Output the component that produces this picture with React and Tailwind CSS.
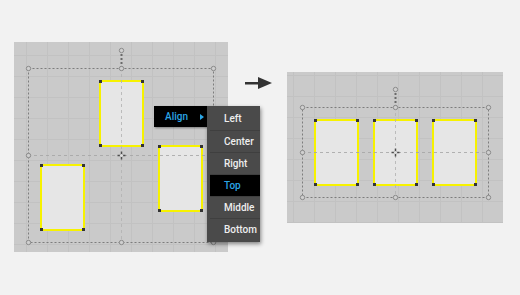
import React from 'react';

const grid =
  'bg-[#cacaca] bg-[linear-gradient(to_right,#c2c2c2_1px,transparent_1px),linear-gradient(to_bottom,#c2c2c2_1px,transparent_1px)] bg-[size:21px_21px]';

function Box({ x, y }) {
  return (
    <div
      className="absolute w-[45px] h-[67px] bg-[#e6e6e6] border-2 border-[#f7f200]"
      style={{ left: x, top: y }}
    >
      <span className="absolute -left-[2px] -top-[2px] w-[3px] h-[3px] bg-[#333]" />
      <span className="absolute -right-[2px] -top-[2px] w-[3px] h-[3px] bg-[#333]" />
      <span className="absolute -left-[2px] -bottom-[2px] w-[3px] h-[3px] bg-[#333]" />
      <span className="absolute -right-[2px] -bottom-[2px] w-[3px] h-[3px] bg-[#333]" />
    </div>
  );
}

// selection frame, handles and guides
function Guides({ w, h, x1, y1, x2, y2, cx, cy, top }) {
  const handles = [
    [x1, y1], [cx, y1], [x2, y1],
    [x1, cy], [x2, cy],
    [x1, y2], [cx, y2], [x2, y2],
    [cx, top],
  ];
  return (
    <svg className="absolute inset-0" width={w} height={h}>
      <rect x={x1 + 0.5} y={y1 + 0.5} width={x2 - x1} height={y2 - y1} fill="none" stroke="#7d7d7d" strokeDasharray="2 2" />
      <line x1={cx + 0.5} y1={top} x2={cx + 0.5} y2={y1} stroke="#6a6a6a" strokeWidth="2" strokeDasharray="2 2" />
      <line x1={cx + 0.5} y1={y1} x2={cx + 0.5} y2={y2} stroke="#b0b0b0" strokeOpacity="0.8" strokeDasharray="3 3" />
      <line x1={x1} y1={cy + 0.5} x2={x2} y2={cy + 0.5} stroke="#a3a3a3" strokeOpacity="0.8" strokeDasharray="3 3" />
      {handles.map(([hx, hy], i) => (
        <circle key={i} cx={hx + 0.5} cy={hy + 0.5} r="2.2" fill="#cfcfcf" stroke="#8a8a8a" />
      ))}
      <g stroke="#4d4d4d" strokeWidth="1.5">
        <line x1={cx - 3.5} y1={cy + 0.5} x2={cx + 4.5} y2={cy + 0.5} />
        <line x1={cx + 0.5} y1={cy - 3.5} x2={cx + 0.5} y2={cy + 4.5} />
      </g>
      <circle cx={cx + 0.5} cy={cy + 0.5} r="1.6" fill="#e0e0e0" />
    </svg>
  );
}

const items = ['Left', 'Center', 'Right', 'Top', 'Middle', 'Bottom'];

export default function App() {
  return (
    <div
      className="w-[520px] h-[295px] bg-[#f2f2f2] flex items-start pl-[14px] overflow-hidden"
      style={{ fontFamily: 'Roboto, "Liberation Sans", sans-serif' }}
    >
      {/* before */}
      <div className={`relative w-[214px] h-[210px] mt-[42px] ${grid} bg-[position:12px_13px]`}>
        <Box x={85} y={38} />
        <Box x={26} y={122} />
        <Box x={144} y={103} />
        <Guides w={214} h={210} x1={14} y1={26} x2={199} y2={200} cx={107} cy={113} top={8} />

        {/* context menu */}
        <div className="absolute left-[140px] top-[64px] w-[53px] h-[21px] bg-black flex items-center pl-[11px] pr-[3px] shadow-[1px_1px_2px_rgba(0,0,0,0.4)] z-10">
          <span className="text-[10px] font-medium text-[#2ba6e6] flex-1 leading-none">Align</span>
          <span className="w-0 h-0 border-y-[3.5px] border-y-transparent border-l-[4px] border-l-[#2ba6e6]" />
        </div>
        <div className="absolute left-[193px] top-[64px] w-[53px] bg-[#4a4a4a] py-[2px] pl-[3px] shadow-[1px_2px_4px_rgba(0,0,0,0.45)] z-10 flex flex-col">
          {items.map((t, i) => (
            <div
              key={t}
              className={`h-[22px] flex items-center pl-[14px] text-[10px] font-medium leading-none ${
                t === 'Top' ? 'bg-black text-[#2ba6e6]' : 'text-[#eeeeee]'
              } ${i > 0 ? 'border-t border-[#3f3f3f]' : ''}`}
            >
              {t}
            </div>
          ))}
        </div>
      </div>

      {/* arrow */}
      <svg className="ml-[17px] mt-[77px] shrink-0" width="27" height="12" viewBox="0 0 27 12">
        <rect x="0" y="5" width="14" height="2.5" fill="#333" />
        <polygon points="13,0 27,6 13,12" fill="#333" />
      </svg>

      {/* after */}
      <div className={`relative w-[216px] h-[151px] ml-[15px] mt-[72px] ${grid} bg-[position:6px_3px]`}>
        <Box x={27} y={47} />
        <Box x={86} y={47} />
        <Box x={145} y={47} />
        <Guides w={216} h={151} x1={15} y1={35} x2={201} y2={125} cx={108} cy={80} top={17} />
      </div>
    </div>
  );
}
